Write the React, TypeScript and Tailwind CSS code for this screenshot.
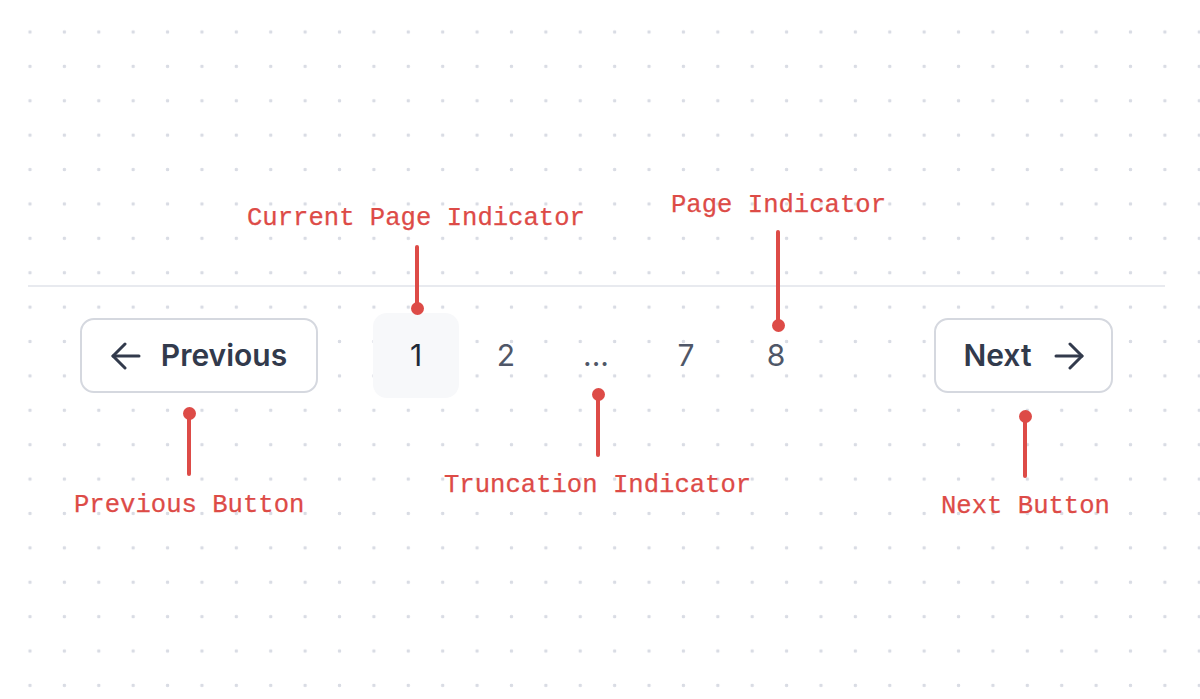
type CalloutProps = {
  label: string;
  labelClass: string;
  stemClass: string;
  dotClass: string;
};

// red annotation: monospace label + stem + round pin
function Callout({ label, labelClass, stemClass, dotClass }: CalloutProps) {
  return (
    <>
      <span
        className={`absolute whitespace-pre font-['Liberation_Mono',monospace] text-[25.6px] leading-none text-[#dd4b47] [-webkit-text-stroke:0.25px_#dd4b47] ${labelClass}`}
      >
        {label}
      </span>
      <span className={`absolute w-[4px] rounded-full bg-[#dd4b47] ${stemClass}`} />
      <span className={`absolute size-[13px] rounded-full bg-[#dd4b47] ${dotClass}`} />
    </>
  );
}

function Arrow({ dir }: { dir: "left" | "right" }) {
  return (
    <svg width="30" height="28" viewBox="0 0 30 28" fill="none" stroke="currentColor" strokeWidth="3" strokeLinecap="round" strokeLinejoin="round">
      {dir === "left" ? (
        <>
          <path d="M28 14H2" />
          <path d="M14 2 2 14l12 12" />
        </>
      ) : (
        <>
          <path d="M2 14h26" />
          <path d="M16 2l12 12-12 12" />
        </>
      )}
    </svg>
  );
}

const pages = [
  { label: "1", current: true },
  { label: "2" },
  { label: "..." },
  { label: "7" },
  { label: "8" },
];

export default function App() {
  return (
    <div className="relative h-[699px] w-[1200px] overflow-hidden bg-white bg-[radial-gradient(circle,#d9dce4_1.8px,transparent_2px)] bg-[size:34.4px_34.4px] bg-[position:12.8px_14.8px]">
      <div className="ml-[28px] mr-[35px] mt-[285px] h-[2px] bg-[#e8eaef]" />

      <div className="mt-[26px] flex items-center pl-[80px] font-['Inter',sans-serif]">
        <button className="flex h-[75px] w-[238px] items-center justify-center gap-[20px] rounded-[14px] border-2 border-[#d5d8df] bg-white text-[30px] font-semibold text-[#323a4c]">
          <Arrow dir="left" />
          <span>Previous</span>
        </button>

        <div className="ml-[55px] flex gap-[4px]">
          {pages.map((p) => (
            <div
              key={p.label}
              className={
                p.current
                  ? "flex h-[85px] w-[86px] items-center justify-center rounded-[14px] bg-[#f7f8fa] text-[30px] text-[#1f2937]"
                  : "flex h-[85px] w-[86px] items-center justify-center text-[30px] text-[#4f5768]"
              }
            >
              {p.label}
            </div>
          ))}
        </div>

        <button className="ml-[115px] flex h-[75px] w-[179px] items-center justify-center gap-[22px] rounded-[14px] border-2 border-[#d5d8df] bg-white text-[30px] font-semibold text-[#323a4c]">
          <span>Next</span>
          <Arrow dir="right" />
        </button>
      </div>

      <Callout
        label="Current Page Indicator"
        labelClass="left-[247px] top-[206px]"
        stemClass="left-[415px] top-[245px] h-[63px]"
        dotClass="left-[410.5px] top-[301.5px]"
      />
      <Callout
        label="Page Indicator"
        labelClass="left-[671px] top-[193px]"
        stemClass="left-[776px] top-[230px] h-[95px]"
        dotClass="left-[771.5px] top-[318.5px]"
      />
      <Callout
        label="Previous Button"
        labelClass="left-[74px] top-[493px]"
        stemClass="left-[187px] top-[413px] h-[63px]"
        dotClass="left-[182.5px] top-[406.5px]"
      />
      <Callout
        label="Truncation Indicator"
        labelClass="left-[444px] top-[473px]"
        stemClass="left-[596px] top-[394px] h-[63px]"
        dotClass="left-[591.5px] top-[387.5px]"
      />
      <Callout
        label="Next Button"
        labelClass="left-[941px] top-[494px]"
        stemClass="left-[1023px] top-[416px] h-[62px]"
        dotClass="left-[1018.5px] top-[409.5px]"
      />
    </div>
  );
}
